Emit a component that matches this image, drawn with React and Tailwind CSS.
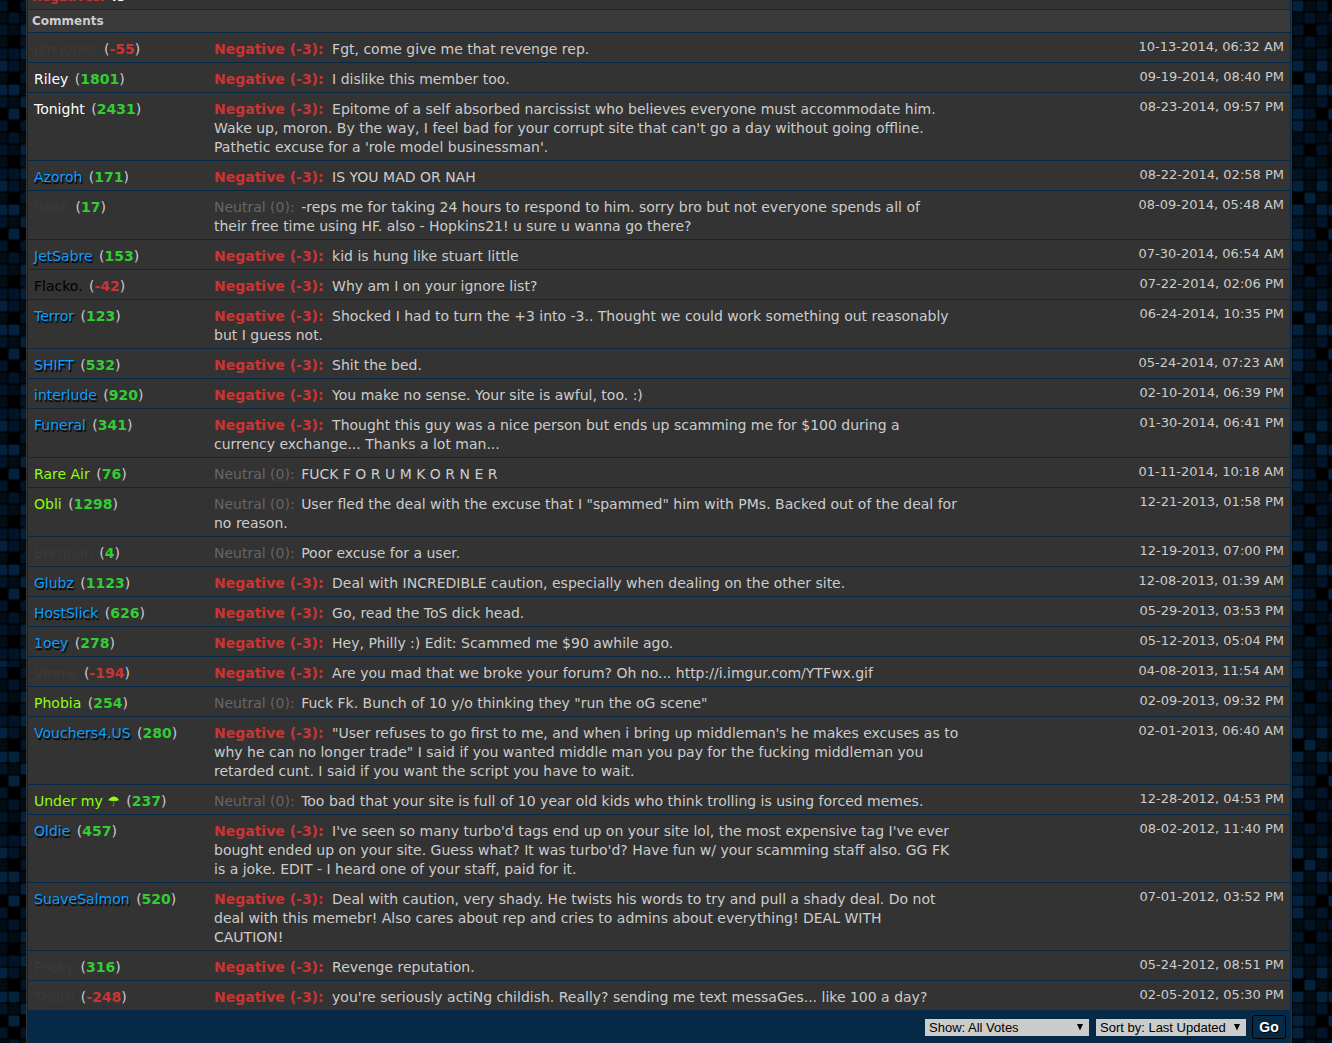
const comentarios = [
  { user: 'Jim Jones', rango: 'cerrado', rep: -55, fecha: '10-13-2014, 06:32 AM', texto: 'Fgt, come give me that revenge rep.' },
  { user: 'Riley', rango: 'blanco', rep: 1801, fecha: '09-19-2014, 08:40 PM', texto: 'I dislike this member too.' },
  { user: 'Tonight', rango: 'blanco', rep: 2431, fecha: '08-23-2014, 09:57 PM', texto: "Epitome of a self absorbed narcissist who believes everyone must accommodate him.\nWake up, moron. By the way, I feel bad for your corrupt site that can't go a day without going offline.\nPathetic excuse for a 'role model businessman'." },
  { user: 'Azoroh', rango: 'azul', rep: 171, fecha: '08-22-2014, 02:58 PM', texto: 'IS YOU MAD OR NAH' },
  { user: '0x80', rango: 'cerrado', rep: 17, neutral: true, fecha: '08-09-2014, 05:48 AM', texto: '-reps me for taking 24 hours to respond to him. sorry bro but not everyone spends all of\ntheir free time using HF. also - Hopkins21! u sure u wanna go there?' },
  { user: 'JetSabre', rango: 'azul', rep: 153, fecha: '07-30-2014, 06:54 AM', texto: 'kid is hung like stuart little' },
  { user: 'Flacko.', rango: 'negro', rep: -42, fecha: '07-22-2014, 02:06 PM', texto: 'Why am I on your ignore list?' },
  { user: 'Terror', rango: 'azul', rep: 123, fecha: '06-24-2014, 10:35 PM', texto: 'Shocked I had to turn the +3 into -3.. Thought we could work something out reasonably\nbut I guess not.' },
  { user: 'SHIFT', rango: 'azul', rep: 532, fecha: '05-24-2014, 07:23 AM', texto: 'Shit the bed.' },
  { user: 'interlude', rango: 'azul', rep: 920, fecha: '02-10-2014, 06:39 PM', texto: 'You make no sense. Your site is awful, too. :)' },
  { user: 'Funeral', rango: 'azul', rep: 341, fecha: '01-30-2014, 06:41 PM', texto: 'Thought this guy was a nice person but ends up scamming me for $100 during a\ncurrency exchange... Thanks a lot man...' },
  { user: 'Rare Air', rango: 'verde', rep: 76, neutral: true, fecha: '01-11-2014, 10:18 AM', texto: 'FUCK F O R U M K O R N E R' },
  { user: 'Obli', rango: 'verde', rep: 1298, neutral: true, fecha: '12-21-2013, 01:58 PM', texto: 'User fled the deal with the excuse that I "spammed" him with PMs. Backed out of the deal for\nno reason.' },
  { user: 'Brennan', rango: 'cerrado', rep: 4, neutral: true, fecha: '12-19-2013, 07:00 PM', texto: 'Poor excuse for a user.' },
  { user: 'Glubz', rango: 'azul', rep: 1123, fecha: '12-08-2013, 01:39 AM', texto: 'Deal with INCREDIBLE caution, especially when dealing on the other site.' },
  { user: 'HostSlick', rango: 'azul', rep: 626, fecha: '05-29-2013, 03:53 PM', texto: 'Go, read the ToS dick head.' },
  { user: '1oey', rango: 'azul', rep: 278, fecha: '05-12-2013, 05:04 PM', texto: 'Hey, Philly :) Edit: Scammed me $90 awhile ago.' },
  { user: 'Vinnie', rango: 'cerrado', rep: -194, fecha: '04-08-2013, 11:54 AM', texto: 'Are you mad that we broke your forum? Oh no... http://i.imgur.com/YTFwx.gif' },
  { user: 'Phobia', rango: 'verde', rep: 254, neutral: true, fecha: '02-09-2013, 09:32 PM', texto: 'Fuck Fk. Bunch of 10 y/o thinking they "run the oG scene"' },
  { user: 'Vouchers4.US', rango: 'azul', rep: 280, fecha: '02-01-2013, 06:40 AM', texto: '"User refuses to go first to me, and when i bring up middleman\'s he makes excuses as to\nwhy he can no longer trade" I said if you wanted middle man you pay for the fucking middleman you\nretarded cunt. I said if you want the script you have to wait.' },
  { user: 'Under my ☂', rango: 'verde', rep: 237, neutral: true, fecha: '12-28-2012, 04:53 PM', texto: 'Too bad that your site is full of 10 year old kids who think trolling is using forced memes.' },
  { user: 'Oldie', rango: 'azul', rep: 457, fecha: '08-02-2012, 11:40 PM', texto: "I've seen so many turbo'd tags end up on your site lol, the most expensive tag I've ever\nbought ended up on your site. Guess what? It was turbo'd? Have fun w/ your scamming staff also. GG FK\nis a joke. EDIT - I heard one of your staff, paid for it." },
  { user: 'SuaveSalmon', rango: 'azul', rep: 520, fecha: '07-01-2012, 03:52 PM', texto: 'Deal with caution, very shady. He twists his words to try and pull a shady deal. Do not\ndeal with this memebr! Also cares about rep and cries to admins about everything! DEAL WITH\nCAUTION!' },
  { user: 'Pocky', rango: 'cerrado', rep: 316, fecha: '05-24-2012, 08:51 PM', texto: 'Revenge reputation.' },
  { user: 'Thoth', rango: 'cerrado', rep: -248, fecha: '02-05-2012, 05:30 PM', texto: "you're seriously actiNg childish. Really? sending me text messaGes... like 100 a day?" },
]

const colorRango = {
  cerrado: 'text-[#3a3a3a]',
  blanco: 'text-white',
  negro: 'text-black',
  azul: 'text-[#0a9dff] [text-shadow:1px_2px_1px_#000]',
  verde: 'text-[#8fff0a]',
}

// brightness of each mosaic tile, one string per row
const mosaicoIzq = ['202', '121', '213', '102', '223', '321', '102', '331', '213', '030']
const mosaicoDer = ['3120', '1212', '2021', '1210', '2121', '3131', '0310', '3133', '2120', '3203']
const tonos = ['#000000', '#010c14', '#021428', '#04223e']

export default function App() {
  return (
    <div className="flex min-h-screen bg-black font-['DejaVu_Sans',Verdana,sans-serif] text-[14px] leading-[19px] text-[#ccc]">
      <Mosaico id="izq" filas={mosaicoIzq} inicio={-4} className="w-[26px]" />

      <main className="flex min-w-0 grow flex-col border-x border-[#333]">
        <div className="grow border-x border-[#072948] bg-[#062947]">
          {/* Totals */}
          <div className="flex h-[9px] items-end overflow-hidden bg-[#333] px-1 pb-0.5 text-[12px] font-bold">
            <p>
              <span className="text-[#c33]">Negatives:</span> <span className="text-white">43</span>
            </p>
          </div>

          {/* Comments */}
          <table className="w-full border-separate border-spacing-0">
            <thead>
              <tr>
                <th colSpan={3} className="h-[23px] border-t border-[#072948] bg-[#3a3a3a] px-1 text-left text-[12px]">
                  Comments
                </th>
              </tr>
            </thead>
            <tbody>
              {comentarios.map((c) => (
                <tr key={c.fecha} className="bg-[#333] align-top">
                  <td className="w-[180px] whitespace-nowrap border-t border-[#072948] pt-[7px] pb-[3px] pl-1.5">
                    <a href="#" className={`mr-0.5 ${colorRango[c.rango]}`}>{c.user}</a>{' '}
                    (<b className={c.rep < 0 ? 'text-[#c33]' : 'text-[#32cd32]'}>{c.rep}</b>)
                  </td>
                  <td className="whitespace-pre border-t border-[#072948] pt-[7px] pb-[3px] pl-1.5">
                    {c.neutral
                      ? <span className="mr-0.5 text-[#666]">Neutral (0):</span>
                      : <b className="mr-1 text-[#c33]">Negative (-3):</b>}
                    {' '}{c.texto}
                  </td>
                  <td className="whitespace-nowrap border-t border-[#072948] pt-1 pr-1.5 text-right text-[13px]">
                    {c.fecha}
                  </td>
                </tr>
              ))}
            </tbody>
          </table>

          {/* Filters */}
          <form className="flex items-center justify-end pt-[5px] pr-1 pb-1 font-['Liberation_Sans',Arial,sans-serif] text-[13px]">
            <Select label="Show" className="mr-[7px] w-[164px]">
              <option>Show: All Votes</option>
              <option>Show: Positive Votes</option>
              <option>Show: Neutral Votes</option>
              <option>Show: Negative Votes</option>
            </Select>
            <Select label="Sort by" className="mr-1.5 w-[150px]">
              <option>Sort by: Last Updated</option>
              <option>Sort by: Username</option>
            </Select>
            <button
              type="button"
              className="h-6 w-[34px] rounded-[3px] border border-black bg-[#062947] text-[14px] font-bold text-white [text-shadow:1px_1px_1px_#000]"
            >
              Go
            </button>
          </form>
        </div>
      </main>

      <Mosaico id="der" filas={mosaicoDer} inicio={0} className="w-10" />
    </div>
  )
}

function Select({ label, className, children }) {
  return (
    <span className={`relative ${className}`}>
      <select aria-label={label} className="block h-[17px] w-full appearance-none bg-[#ccc] pl-1 leading-[17px] text-black">
        {children}
      </select>
      <svg viewBox="0 0 8 7" className="pointer-events-none absolute top-[5px] right-[5px] h-[7px] w-2" aria-hidden="true">
        <path d="M1 0h6L4 6.5z" fill="#000" />
      </svg>
    </span>
  )
}

function Mosaico({ id, filas, inicio, className }) {
  return (
    <div className={`relative shrink-0 overflow-hidden ${className}`} aria-hidden="true">
      <svg className="absolute inset-0 h-full w-full">
        <defs>
          <pattern id={id} x={inicio} width="48" height="120" patternUnits="userSpaceOnUse">
            {filas.map((fila, y) =>
              fila.split('').map((t, x) => (
                <g key={`${x}-${y}`} fill={tonos[t]}>
                  <rect x={x * 12} y={y * 12} width="12" height="12" rx="3" opacity="0.45" />
                  <rect x={x * 12 + 1} y={y * 12 + 1} width="10" height="10" rx="2" />
                </g>
              ))
            )}
          </pattern>
        </defs>
        <rect width="48" height="667" fill={`url(#${id})`} />
        <svg y="667" overflow="visible">
          <rect width="48" height="100%" fill={`url(#${id})`} />
        </svg>
      </svg>
    </div>
  )
}
